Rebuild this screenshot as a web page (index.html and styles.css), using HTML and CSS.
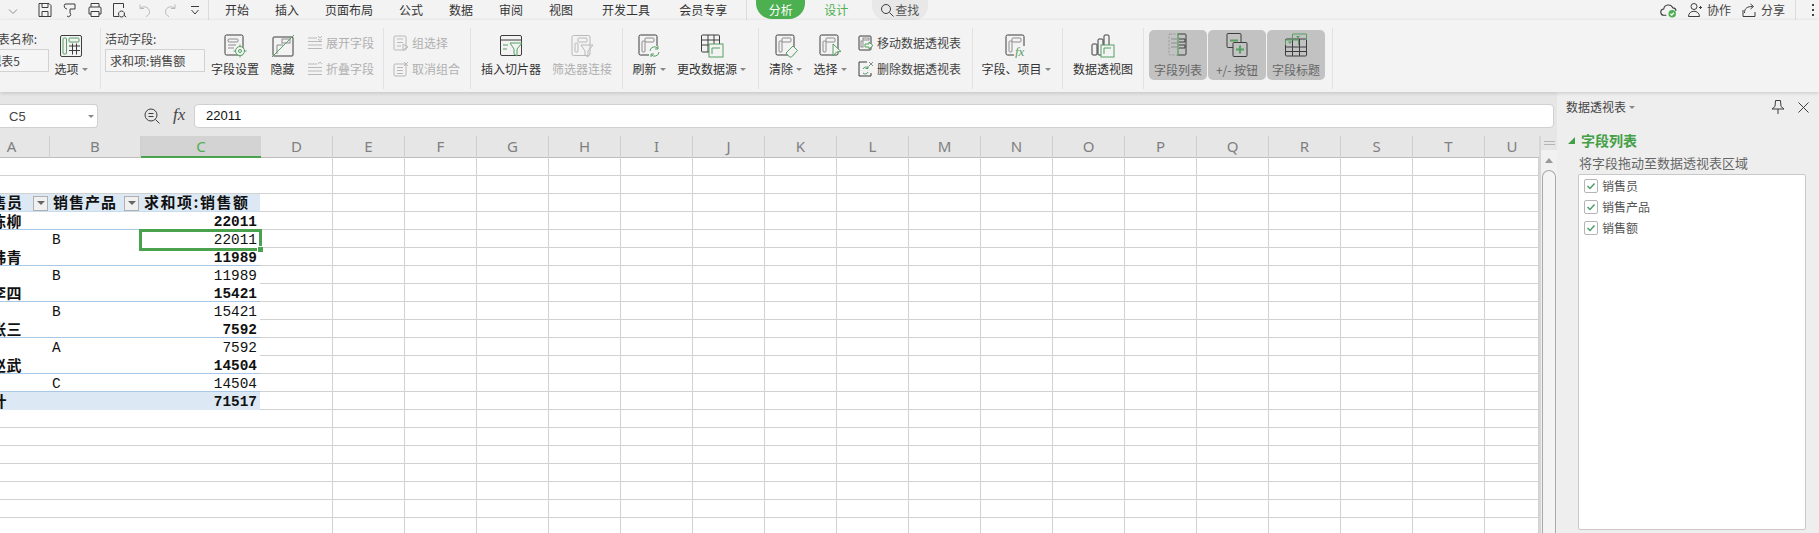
FILE: index.html
```
<!DOCTYPE html>
<html lang="zh-CN">
<head>
<meta charset="utf-8">
<title>数据透视表</title>
<link rel="stylesheet" href="styles.css">
</head>
<body>
<header class="titlebar">
  <div class="tb-start">
    <svg class="i12" viewBox="0 0 12 12"><path class="m" d="M4 5.5l4 4 4-4"/></svg>
  </div>
  <div class="qat">
    <svg class="q" viewBox="0 0 16 16"><path class="d" d="M2 1.5h10l2 2v11H2zM5 1.5v4h6v-4M5 14.5v-5h6v5"/></svg>
    <svg class="q" viewBox="0 0 16 16"><path class="d" d="M3 2h4l6 0v5H8M8 7v4M3 2a3 3 0 0 0 2 5M5 14a2 2 0 1 0 3-3"/></svg>
    <svg class="q" viewBox="0 0 16 16"><path class="d" d="M4 5V1.5h8V5M2 12V6a1 1 0 0 1 1-1h10a1 1 0 0 1 1 1v6h-2M4 12H2M4 9.5h8v5H4z"/></svg>
    <svg class="q" viewBox="0 0 16 16"><path class="d" d="M7 14.5H1.5v-13h10V6M9.5 9a3 3 0 1 0 .01 0M11.700 13l2.500 2"/></svg>
    <svg class="q" viewBox="0 0 16 16"><path class="l" d="M3 2.500v4h4M3 6.500c3-3 9-2 9.500 3 .2 2-1 4-3.500 5"/></svg>
    <svg class="q" viewBox="0 0 16 16"><path class="l" d="M13 2.500v4H9M13 6.500c-3-3-9-2-9.500 3-.2 2 1 4 3.500 5"/></svg>
    <svg class="q" viewBox="0 0 16 16"><path class="d" d="M4 4.500h8M4.500 8l3.500 4 3.500-4"/></svg>
  </div>
  <span class="vline"></span>
  <nav class="tabs">
    <span>开始</span><span>插入</span><span>页面布局</span><span>公式</span><span>数据</span><span>审阅</span><span>视图</span><span class="tab-dev">开发工具</span><span class="tab-vip">会员专享</span>
  </nav>
  <span class="vline tab-sep"></span>
  <span class="pill-active">分析</span>
  <span class="tab-design">设计</span>
  <span class="pill-search">
    <svg class="i14" viewBox="0 0 14 14"><circle class="d" cx="6" cy="6" r="4.500"/><path class="d" d="M9.500 9.500l4 4"/></svg>查找
  </span>
  <div class="tb-end">
    <svg class="cloud" viewBox="0 0 16 14"><path class="d" d="M6 11.500H4a3 3 0 0 1-.5-6A4.500 4.500 0 0 1 12 4.500a3 3 0 0 1 3 3"/><circle class="okdot" cx="11.500" cy="10" r="3.500"/><path class="okmark" d="M9.800 10l1.300 1.300 2-2.200"/></svg>
    <svg class="user" viewBox="0 0 14 14"><circle class="d" cx="6" cy="3.500" r="3"/><path class="d" d="M.5 13.500c0-7 11-7 11 0zM11 4.500h3M12.500 3v3"/></svg>
    <span class="tb-txt">协作</span>
    <svg class="share" viewBox="0 0 14 14"><path class="d" d="M1 7v6.500h12V9M2.500 10c0-5 3-6.500 8-6.500M8.500 1l3 2.500-3 2.500"/></svg>
    <span class="tb-txt">分享</span>
    <span class="vline end-sep"></span>
    <span class="dots"><i></i><i></i><i></i></span>
  </div>
</header>

<section class="ribbon">
  <div class="grp g1">
    <div class="form clipped">
      <span class="form-label">数据透视表名称:</span>
      <span class="form-input">数据透视表5</span>
    </div>
    <div class="tool w32">
      <svg class="ic" viewBox="0 0 24 24"><rect class="d" x="1.500" y="1.500" width="21" height="21" rx="1.500"/><rect class="g" x="4" y="4" width="3.500" height="16" rx="1"/><rect class="g" x="10" y="4" width="10" height="4" rx="1"/><path class="d" d="M10 12h11M10 16.500h11M13.500 9.500v11M17.500 9.500v11"/></svg>
      <span class="lbl">选项<b class="caret"></b></span>
    </div>
  </div>
  <span class="sep"></span>
  <div class="grp g2">
    <div class="form w100">
      <span class="form-label">活动字段:</span>
      <span class="form-input pad">求和项:销售额</span>
    </div>
    <div class="tool w48 ml6">
      <svg class="ic" viewBox="0 0 24 24"><rect class="d" x="2" y="1" width="18" height="20" rx="1.500"/><rect class="m" x="5" y="5" width="10" height="3" rx="1"/><path class="m" d="M5 11h8M5 14h6"/><circle class="gshape" cx="17" cy="17" r="4.500"/><circle class="g" cx="17" cy="17" r="1.500"/><path class="g" d="M17 10.500v2M17 21.500v2M10.500 17h2M21.500 17h2"/></svg>
      <span class="lbl">字段设置</span>
    </div>
    <div class="tool w23 ml12">
      <svg class="ic" viewBox="0 0 24 24"><rect class="d" x="2" y="3" width="20" height="19" rx="1"/><rect class="m" x="11" y="5" width="8" height="4"/><path class="m" d="M6 20V11h6"/><path class="g" d="M1 23L23 1"/></svg>
      <span class="lbl">隐藏</span>
    </div>
    <div class="stack w66 ml13 off">
      <div class="row"><svg class="i16" viewBox="0 0 16 16"><path class="l" d="M1 3h9M1 6.500h14M1 10h14M1 13.500h14M11 1l2 2 2-2M11 4l2 1.500L15 4"/></svg><span>展开字段</span></div>
      <div class="row"><svg class="i16" viewBox="0 0 16 16"><path class="l" d="M1 3h9M1 6.500h14M1 10h14M1 13.500h14M11 3l2-2 2 2"/></svg><span>折叠字段</span></div>
    </div>
  </div>
  <span class="sep"></span>
  <div class="grp g3">
    <div class="stack w67 off">
      <div class="row"><svg class="i16" viewBox="0 0 16 16"><rect class="l" x="1" y="1" width="12" height="14" rx="1"/><path class="l" d="M4 4h6M4 7.500h6M4 11h4M10 9l5 3-5 3z"/></svg><span>组选择</span></div>
      <div class="row"><svg class="i16" viewBox="0 0 16 16"><rect class="l" x="1" y="3" width="12" height="12" rx="1"/><path class="l" d="M4 6.500h6M4 9.500h6M4 12.500h6M11 1l4 4M15 1l-4 4"/></svg><span>取消组合</span></div>
    </div>
  </div>
  <span class="sep"></span>
  <div class="grp g4">
    <div class="tool w60">
      <svg class="ic" viewBox="0 0 24 24"><rect class="d" x="1.500" y="1.500" width="21" height="20" rx="1.500"/><path class="d" d="M1.500 6h21"/><path class="g" d="M4 11h5M4 15h4M11 9h12l-5 6v7l-3-2v-5z"/></svg>
      <span class="lbl">插入切片器</span>
    </div>
    <div class="tool w60 ml11 off">
      <svg class="ic" viewBox="0 0 24 24"><rect class="l" x="2" y="1.500" width="18" height="20" rx="1.500"/><rect class="l" x="8" y="4" width="9" height="4" rx="1"/><rect class="l" x="5" y="9" width="3" height="9" rx="1"/><path class="l" d="M11 11h12l-5 6v6l-3-2v-4z"/></svg>
      <span class="lbl">筛选器连接</span>
    </div>
  </div>
  <span class="sep"></span>
  <div class="grp g5">
    <div class="tool w32">
      <svg class="ic" viewBox="0 0 24 24"><rect class="d" x="2" y="1" width="18" height="20" rx="1.500"/><rect class="m" x="8" y="4" width="9" height="4" rx="1"/><rect class="m" x="5" y="7" width="3" height="11" rx="1"/><path class="bgstroke" d="M12 12h11v11H12z"/><path class="g" d="M13 17a4.500 4.500 0 0 1 8-2.500M21 12v3h-3M22 18a4.500 4.500 0 0 1-8 2.500M14 23v-3h3"/></svg>
      <span class="lbl">刷新<b class="caret"></b></span>
    </div>
    <div class="tool w67 ml13">
      <svg class="ic" viewBox="0 0 24 24"><rect class="d" x="1.500" y="1" width="18" height="17" rx="1"/><path class="d" d="M1.500 6h18M1.500 11h18M8 1v17M14 1v17"/><rect class="gshape" x="9" y="10" width="14" height="13"/><path class="g" d="M12 20v-6h8"/></svg>
      <span class="lbl">更改数据源<b class="caret"></b></span>
    </div>
  </div>
  <span class="sep"></span>
  <div class="grp g6">
    <div class="tool w31">
      <svg class="ic" viewBox="0 0 24 24"><rect class="d" x="2" y="1" width="18" height="20" rx="1.500"/><rect class="m" x="8" y="4" width="9" height="4" rx="1"/><rect class="m" x="5" y="7" width="3" height="11" rx="1"/><path class="gshape" d="M12 19l7-7 4.500 4.500-6 6.500h-2z"/></svg>
      <span class="lbl">清除<b class="caret"></b></span>
    </div>
    <div class="tool w32 ml13">
      <svg class="ic" viewBox="0 0 24 24"><rect class="d" x="2" y="1" width="18" height="20" rx="1.500"/><rect class="m" x="8" y="4" width="9" height="4" rx="1"/><rect class="m" x="5" y="7" width="3" height="11" rx="1"/><path class="gshape" d="M15 10l8 7.500-4.500.5-3.500 4z"/></svg>
      <span class="lbl">选择<b class="caret"></b></span>
    </div>
    <div class="stack w104 ml12">
      <div class="row"><svg class="i16" viewBox="0 0 16 16"><rect class="d" x="1" y="1" width="12" height="14" rx="1"/><rect class="m" x="5" y="3" width="6" height="2"/><rect class="m" x="3" y="6" width="2" height="6"/><path class="gshape" d="M7 9h4V7l4 3.500-4 3.500v-2H7z"/></svg><span>移动数据透视表</span></div>
      <div class="row"><svg class="i16" viewBox="0 0 16 16"><path class="d" d="M9 1H1v14h12v-3"/><path class="m" d="M11 1l4 4M15 1l-4 4"/><path class="g" d="M5 8a3 3 0 0 1 5-1M10 5v2.500H7.500M10 11a3 3 0 0 1-5 1"/></svg><span>删除数据透视表</span></div>
    </div>
  </div>
  <span class="sep"></span>
  <div class="grp g7">
    <div class="tool w68">
      <svg class="ic" viewBox="0 0 24 24"><rect class="d" x="2" y="1" width="18" height="20" rx="1.500"/><rect class="m" x="8" y="4" width="9" height="4" rx="1"/><rect class="m" x="5" y="7" width="3" height="11" rx="1"/><rect class="bgstroke" x="10" y="12" width="14" height="12"/><text class="fxmark" x="11" y="22">fx</text></svg>
      <span class="lbl">字段、项目<b class="caret"></b></span>
    </div>
  </div>
  <span class="sep"></span>
  <div class="grp g8">
    <div class="tool w60">
      <svg class="ic" viewBox="0 0 24 24"><rect class="d" x="1" y="10" width="5" height="11" rx="1"/><rect class="d" x="7" y="5" width="5" height="16" rx="1"/><rect class="d" x="13" y="1" width="5" height="20" rx="1"/><rect class="gshape" x="10" y="11" width="13" height="12"/><path class="g" d="M13 20v-6h7"/></svg>
      <span class="lbl">数据透视图</span>
    </div>
  </div>
  <span class="sep"></span>
  <div class="grp g9">
    <div class="toggle">
      <svg class="ic" viewBox="0 0 24 24"><rect class="dash" x="3" y="1" width="9" height="21" rx="1"/><path class="m" d="M5 6h6M5 10h6M5 14h6"/><path class="d" d="M12 1h7a1 1 0 0 1 1 1v19a1 1 0 0 1-1 1h-7"/><path class="d" d="M13 6h6v3h-6M13 12h6v3h-6"/><path class="gline" d="M12 0v23"/></svg>
      <span>字段列表</span>
    </div>
    <div class="toggle">
      <svg class="ic" viewBox="0 0 24 24"><rect class="d" x="2" y="0.500" width="14" height="14" rx="1"/><path class="gbold" d="M5 7.500h8"/><rect class="toggle-fill" x="8" y="9.500" width="14" height="14" rx="1"/><path class="gbold" d="M11 16.500h8M15 12.500v8"/></svg>
      <span>+/- 按钮</span>
    </div>
    <div class="toggle">
      <svg class="ic" viewBox="0 0 24 24"><rect class="d" x="1.500" y="6" width="21" height="17" rx="1"/><path class="d" d="M1.500 14h21M1.500 18.500h21M8.500 6v17M15.500 6v17"/><path class="gfrect" d="M8.500 6.500V1H22.500V7M1.500 12V7h13v5"/><path class="tri" d="M4 8.500h4l-2 2.500zM12 3h4l-2 2.500z"/></svg>
      <span>字段标题</span>
    </div>
  </div>
  <span class="sep"></span>
</section>

<main class="work">
  <div class="left">
    <div class="formula">
      <div class="namebox">C5<b class="caret"></b></div>
      <svg class="zoomfx" viewBox="0 0 16 16"><circle class="d" cx="7" cy="7" r="6"/><path class="d" d="M4.500 5.500h5M4.500 8.500h5M11.500 11.500l4 4"/></svg>
      <span class="fx">fx</span>
      <div class="fbox">22011</div>
    </div>
    <div class="sheetarea">
      <div class="sheet">
        <div class="colhead">
          <span class="ca">A</span><span>B</span><span class="cur">C</span><span>D</span><span>E</span><span>F</span><span>G</span><span>H</span><span>I</span><span>J</span><span>K</span><span>L</span><span>M</span><span>N</span><span>O</span><span>P</span><span>Q</span><span>R</span><span>S</span><span>T</span><span class="cu">U</span>
        </div>
        <div class="cells">
          <i></i><i></i><i></i><i></i><i></i><i></i><i></i><i></i><i></i><i></i><i></i><i></i><i></i><i></i><i></i><i></i><i></i><i></i><i></i><i></i><i></i>
          <table class="pivot">
            <colgroup><col class="pa"><col class="pb"><col class="pc"></colgroup>
            <thead>
              <tr>
                <th class="first">销售员<b class="fbtn"></b></th>
                <th>销售产品<b class="fbtn"></b></th>
                <th class="sumhead">求和项:销售额</th>
              </tr>
            </thead>
            <tbody>
              <tr class="sub"><td class="name">陈柳</td><td></td><td class="num">22011</td></tr>
              <tr><td></td><td class="prod">B</td><td class="num">22011<span class="selbox"><b class="handle"></b></span></td></tr>
              <tr class="sub"><td class="name">韩青</td><td></td><td class="num">11989</td></tr>
              <tr><td></td><td class="prod">B</td><td class="num">11989</td></tr>
              <tr class="sub"><td class="name">李四</td><td></td><td class="num">15421</td></tr>
              <tr><td></td><td class="prod">B</td><td class="num">15421</td></tr>
              <tr class="sub"><td class="name">张三</td><td></td><td class="num">7592</td></tr>
              <tr><td></td><td class="prod">A</td><td class="num">7592</td></tr>
              <tr class="sub"><td class="name">赵武</td><td></td><td class="num">14504</td></tr>
              <tr class="last"><td></td><td class="prod">C</td><td class="num">14504</td></tr>
              <tr class="total"><td class="first">总计</td><td></td><td class="num">71517</td></tr>
            </tbody>
          </table>
        </div>
      </div>
      <div class="vscroll">
        <div class="splitter"></div>
        <div class="track">
          <b class="uparrow"></b>
          <div class="thumb"></div>
        </div>
      </div>
    </div>
  </div>
  <aside class="panel">
    <div class="panel-head">
      <span>数据透视表</span><b class="caret"></b>
      <svg class="pin" viewBox="0 0 14 14"><path class="d" d="M4.500.5h5l.5 6 3 2.500H1l3-2.500zM7 9v5"/></svg>
      <svg class="close" viewBox="0 0 11 11"><path class="d" d="M.5.5l10 10M10.500.5l-10 10"/></svg>
    </div>
    <div class="sect"><b class="tri-open"></b>字段列表</div>
    <div class="hint">将字段拖动至数据透视表区域</div>
    <div class="fields">
      <div class="field"><span class="cb"><svg viewBox="0 0 12 12"><path d="M2.500 6l2.500 2.500 4.500-5"/></svg></span>销售员</div>
      <div class="field"><span class="cb"><svg viewBox="0 0 12 12"><path d="M2.500 6l2.500 2.500 4.500-5"/></svg></span>销售产品</div>
      <div class="field"><span class="cb"><svg viewBox="0 0 12 12"><path d="M2.500 6l2.500 2.500 4.500-5"/></svg></span>销售额</div>
    </div>
  </aside>
</main>
</body>
</html>
```

FILE: styles.css
```
* { box-sizing: border-box; }
html, body { margin: 0; height: 100%; }
body {
  width: 1819px;
  height: 533px;
  overflow: hidden;
  display: flex;
  flex-direction: column;
  background: #f3f3f3;
  color: #444;
  font: 12px/16px "Noto Sans CJK SC", "Liberation Sans", sans-serif;
}
svg { display: block; flex: none; }
.d { fill: none; stroke: #3d3d3d; stroke-width: 1; }
.g { fill: none; stroke: #55a063; stroke-width: 1; }
.m { fill: none; stroke: #8d8d8d; stroke-width: 1; }
.l { fill: none; stroke: #b9b9b9; stroke-width: 1; }
.gshape { fill: #f3f3f3; stroke: #55a063; stroke-width: 1; }
.bgstroke { fill: #f3f3f3; stroke: none; }
.dash { fill: none; stroke: #9a9a9a; stroke-dasharray: 2 1.500; }
.gline { fill: none; stroke: #55a063; stroke-width: 1.200; }
.gbold { fill: none; stroke: #55a063; stroke-width: 2; }
.gfrect { fill: none; stroke: #55a063; }
.tri { fill: #55a063; }
.toggle-fill { fill: #c2c2c2; stroke: #3d3d3d; }
.fxmark { font: italic 13px "Liberation Serif", serif; fill: #55a063; }
.okdot { fill: #4caf50; }
.okmark { fill: none; stroke: #fff; stroke-width: 1.200; }

/* title bar */
.titlebar {
  height: 20px;
  flex: none;
  display: flex;
  align-items: flex-start;
  overflow: hidden;
}
.tb-start { width: 28px; padding: 4px 0 0 4px; height: 20px; }
.i12 { width: 14px; height: 12px; }
.qat { display: flex; padding-left: 4px; width: 180px; }
.q { width: 16px; height: 16px; margin: 2px 4px 0 5px; }
.vline { width: 1px; height: 20px; background: #dcdcdc; flex: none; }
.tabs { display: flex; gap: 26px; margin-left: 16px; line-height: 20px; color: #333; }
.tab-dev { margin-left: 3px; }
.tab-vip { margin-left: 3px; }
.tab-sep { margin-left: 19px; }
.pill-active {
  margin-left: 9px;
  width: 49px;
  height: 19px;
  line-height: 19px;
  text-align: center;
  background: #4caf50;
  color: #fff;
  border-radius: 0 0 16px 16px;
}
.tab-design { margin-left: 19px; color: #4caf50; line-height: 20px; }
.pill-search {
  margin-left: 24px;
  width: 56px;
  height: 20px;
  padding-left: 8px;
  display: flex;
  align-items: center;
  gap: 1px;
  background: #e8e8e8;
  border-radius: 0 0 14px 14px;
  color: #555;
}
.i14 { width: 14px; height: 14px; }
.tb-end { margin-left: auto; display: flex; align-items: center; height: 20px; color: #444; }
.cloud { width: 17px; height: 15px; }
.user { width: 14px; height: 14px; margin-left: 11px; }
.tb-txt { margin-left: 5px; }
.share { width: 14px; height: 14px; margin-left: 11px; }
.end-sep { margin-left: 10px; }
.dots { display: flex; flex-direction: column; gap: 3px; margin: 0 5px 0 16px; }
.dots i { width: 2px; height: 2px; background: #444; }

/* ribbon */
.ribbon {
  height: 72px;
  flex: none;
  display: flex;
  position: relative;
  z-index: 2;
  background: #f3f3f3;
  box-shadow: 0 1px 4px rgba(0, 0, 0, .16);
}
.sep { width: 1px; height: 61px; margin-top: 8px; background: #e2e2e2; flex: none; }
.grp { display: flex; align-items: flex-start; flex: none; white-space: nowrap; }
.g1 { width: 100px; }
.g2 { width: 282px; padding-left: 4px; }
.g3 { width: 86px; padding-left: 9px; }
.g4 { width: 151px; padding-left: 10px; }
.g5 { width: 135px; padding-left: 10px; }
.g6 { width: 213px; padding-left: 11px; }
.g7 { width: 89px; padding-left: 9px; }
.g8 { width: 80px; padding-left: 10px; }
.g9 { width: 188px; padding-left: 5px; gap: 1px; }

.form { padding-top: 11px; flex: none; }
.w100 { width: 100px; }
.clipped {
  width: 49px;
  margin-right: 6px;
  overflow: hidden;
  display: flex;
  flex-direction: column;
  align-items: flex-end;
}
.form-label { display: block; height: 16px; }
.clipped .form-label { padding-right: 12px; }
.form-input {
  display: block;
  width: 100%;
  height: 23px;
  margin-top: 2px;
  line-height: 21px;
  border: 1px solid #d2d2d2;
  background: #f5f5f5;
}
.form-input.pad { padding-left: 4px; }
.clipped .form-input { width: auto; border-left: 0; padding-right: 28px; }

.tool { display: flex; flex-direction: column; align-items: center; padding-top: 14px; flex: none; color: #333; }
.ic { width: 24px; height: 24px; }
.lbl { margin-top: 3px; height: 16px; display: flex; align-items: center; white-space: nowrap; }
.off, .off .lbl { color: #b0b0b0; }
.caret {
  display: inline-block;
  width: 0;
  height: 0;
  margin-left: 3px;
  border: 3px solid transparent;
  border-top: 3px solid #888;
  border-bottom: 0;
}
.w23 { width: 23px; } .w31 { width: 31px; } .w32 { width: 32px; } .w48 { width: 48px; }
.w60 { width: 60px; } .w66 { width: 66px; } .w67 { width: 67px; } .w68 { width: 68px; }
.w104 { width: 104px; }
.ml6 { margin-left: 6px; } .ml11 { margin-left: 11px; } .ml12 { margin-left: 12px; } .ml13 { margin-left: 13px; }

.stack { display: flex; flex-direction: column; gap: 10px; padding-top: 15px; flex: none; }
.row { display: flex; align-items: center; gap: 3px; height: 16px; }
.i16 { width: 16px; height: 16px; }

.toggle {
  width: 58px;
  height: 50px;
  margin-top: 10px;
  padding-top: 3px;
  border-radius: 5px;
  background: #c2c2c2;
  color: #666;
  display: flex;
  flex-direction: column;
  align-items: center;
  gap: 5px;
}

/* main */
.work { flex: 1; display: flex; min-height: 0; }
.left { width: 1557px; display: flex; flex-direction: column; background: #e6e6e6; }
.formula { height: 44px; flex: none; display: flex; align-items: flex-start; padding-top: 12px; }
.namebox {
  width: 98px;
  height: 24px;
  padding-left: 9px;
  display: flex;
  align-items: center;
  justify-content: space-between;
  padding-right: 3px;
  background: #fff;
  border: 1px solid #d0d0d0;
  border-left: 0;
  border-radius: 0 4px 4px 0;
  font: 13px "Liberation Sans", sans-serif;
  color: #444;
}
.zoomfx { width: 16px; height: 16px; margin: 4px 0 0 46px; }
.fx { margin: 1px 0 0 13px; width: 21px; font: italic 17px/20px "Liberation Serif", serif; color: #444; }
.fbox {
  flex: 1;
  height: 24px;
  margin-right: 3px;
  padding-left: 11px;
  background: #fff;
  border: 1px solid #d0d0d0;
  border-radius: 4px;
  font: 13px/22px "Liberation Sans", sans-serif;
  color: #111;
}

.sheetarea { flex: 1; display: flex; min-height: 0; }
.sheet { width: 1539px; display: flex; flex-direction: column; }
.colhead, .cells {
  display: grid;
  grid-template-columns: 50px 91px 120px repeat(17, 72px) 54px;
}
.colhead {
  height: 22px;
  flex: none;
  border-bottom: 1px solid #bdbdbd;
  font: 15px/21px "Noto Sans", sans-serif;
  color: #808080;
  text-align: center;
}
.colhead span { border-right: 1px solid #cfcfcf; }
.colhead .ca { padding-right: 26px; }
.colhead .cu { border-right: 0; }
.colhead .cur { background: #d3d3d3; color: #4caf50; border-bottom: 2px solid #4aa24e; height: 22px; border-right: 0; }

.cells {
  flex: 1;
  min-height: 0;
  overflow: hidden;
  grid-template-rows: 100%;
  background-color: #fff;
  background-image: repeating-linear-gradient(180deg, transparent 0 17px, #d2d2d2 17px 18px);
}
.cells > i { grid-row: 1; border-right: 1px solid #d2d2d2; }
.pivot {
  grid-row: 1;
  grid-column: 1 / 4;
  align-self: start;
  justify-self: start;
  width: 285px;
  margin: 36px 0 0 -25px;
  table-layout: fixed;
  border-collapse: separate;
  border-spacing: 0;
  background: #fff;
  font: 14.400px/14px "Liberation Mono", monospace;
  color: #111;
}
.pa { width: 74px; } .pb { width: 91px; } .pc { width: 120px; }
.pivot th, .pivot td { height: 18px; padding: 0; white-space: nowrap; vertical-align: top; }
.pivot th {
  position: relative;
  text-align: left;
  background: #dce9f5;
  border-bottom: 1px solid #c9dcee;
  font: bold 15px/15px "Noto Sans CJK SC", sans-serif;
  letter-spacing: 1px;
  padding-left: 4px;
  color: #111;
}
.pivot th.first { padding-left: 1px; letter-spacing: .5px; }
.pivot th.sumhead { letter-spacing: 1.500px; }
.fbtn {
  position: absolute;
  right: 1px;
  top: 2px;
  width: 15px;
  height: 15px;
  background: #f0f0f0;
  border: 1px solid #b0b0b0;
}
.fbtn::after {
  content: "";
  position: absolute;
  left: 3px;
  top: 4px;
  border: 4px solid transparent;
  border-top: 4px solid #666;
  border-bottom: 0;
}
.pivot .sub td { font-weight: bold; border-bottom: 1px solid #a9c8e6; }
.pivot .last td { border-bottom: 1px solid #a9c8e6; }
.pivot .name { font: bold 15px/17px "Noto Sans CJK SC", sans-serif; padding-left: 16px; letter-spacing: .5px; }
.pivot .prod { padding: 3px 0 0 3px; }
.pivot .num { text-align: right; padding: 3px 3px 0 0; position: relative; }
.pivot .total td { background: #dce9f5; font-weight: bold; }
.pivot .total .first { font: bold 15px/17px "Noto Sans CJK SC", sans-serif; padding-left: 1px; letter-spacing: .5px; }
.selbox {
  position: absolute;
  left: -1px;
  right: -2px;
  top: -1px;
  bottom: -3px;
  border: 3px solid #4aa24e;
}
.handle {
  position: absolute;
  right: -4px;
  bottom: -4px;
  width: 6px;
  height: 6px;
  background: #4aa24e;
  border: 1px solid #fff;
  border-width: 1px 0 0 1px;
}

.vscroll { width: 18px; display: flex; flex-direction: column; border-left: 2px solid #d6d6d6; }
.splitter {
  height: 9px;
  flex: none;
  margin: 5px 2px 0 3px;
  border-top: 1px solid #b5b5b5;
}
.splitter::after { content: ""; display: block; margin-top: 2px; border-top: 1px solid #b5b5b5; }
.track { flex: 1; display: flex; flex-direction: column; align-items: center; background: #f1f1f1; padding-top: 8px; }
.uparrow { width: 0; height: 0; border: 4px solid transparent; border-bottom: 5px solid #999; border-top: 0; flex: none; }
.thumb {
  margin-top: 7px;
  width: 14px;
  flex: 1;
  background: #f4f4f4;
  border: 1px solid #a8a8a8;
  border-bottom: 0;
  border-radius: 7px 7px 0 0;
}

/* task pane */
.panel { width: 262px; background: #eeeeee; color: #444; display: flex; flex-direction: column; }
.panel-head { display: flex; align-items: center; height: 16px; margin: 7px 0 0 9px; }
.panel-head .caret { margin-left: 3px; }
.pin { width: 14px; height: 14px; margin-left: auto; }
.close { width: 11px; height: 11px; margin: 0 10px 0 13px; }
.sect {
  margin: 17px 0 0 11px;
  display: flex;
  align-items: center;
  gap: 6px;
  height: 16px;
  font-size: 14px;
  font-weight: bold;
  color: #43a047;
}
.tri-open { width: 0; height: 0; border-style: solid; border-width: 0 0 7px 7px; border-color: transparent transparent #43a047 transparent; }
.hint { margin: 7px 0 0 22px; height: 16px; font-size: 13px; line-height: 16px; color: #666; white-space: nowrap; }
.fields {
  width: 228px;
  height: 356px;
  margin: 3px 0 0 21px;
  background: #fff;
  border: 1px solid #c8c8c8;
  border-radius: 2px;
}
.field { display: flex; align-items: center; gap: 4px; height: 21px; padding-left: 5px; color: #555; }
.cb { width: 14px; height: 14px; background: #fff; border: 1px solid #b5b5b5; border-radius: 2px; }
.cb svg { width: 12px; height: 12px; fill: none; stroke: #4f9d6a; stroke-width: 1.500; }
```
